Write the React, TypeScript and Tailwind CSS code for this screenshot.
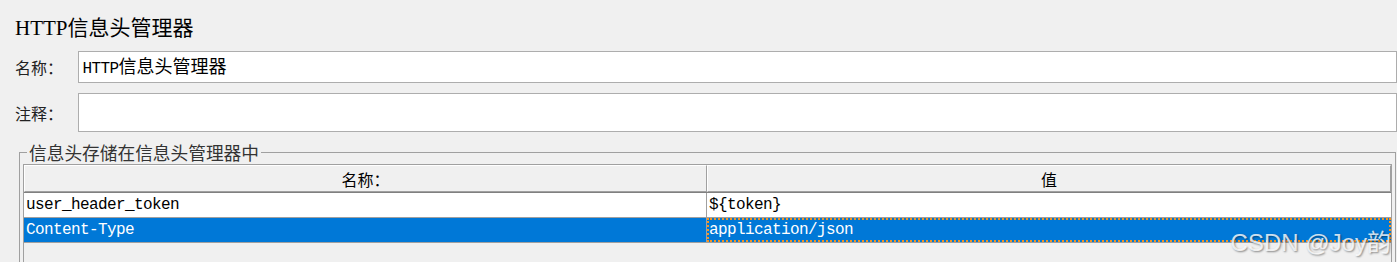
import React from 'react';

const cjk = '"Noto Sans CJK SC", sans-serif';
const mono = '"Liberation Mono", "Noto Sans CJK SC", monospace';

interface HeaderRow {
  name: string;
  value: string;
}

const rows: HeaderRow[] = [
  { name: 'user_header_token', value: '${token}' },
  { name: 'Content-Type', value: 'application/json' },
];

const selectedIndex = 1;

export default function App() {
  return (
    <div
      className="relative w-[1397px] h-[262px] overflow-hidden bg-[#f0f0f0] text-black"
      style={{ fontFamily: cjk }}
    >
      {/* 标题 */}
      <div className="h-[51px] pl-[15px] pt-[12px]">
        <h1 className="text-[21px] leading-[28px] font-normal">
          <span className="text-[21px]" style={{ fontFamily: '"Liberation Serif", serif' }}>HTTP</span>信息头管理器
        </h1>
      </div>

      {/* 名称 */}
      <div className="flex items-center h-[32px]">
        <label className="w-[79px] pl-[15px] text-[16px] leading-[20px] text-[#222]">名称：</label>
        <div className="flex items-center w-[1330px] h-[32px] bg-white border border-[#adadad] pl-[3px]">
          <span className="text-[18px] leading-[20px]">
            <span className="text-[16px] tracking-[-0.6px]" style={{ fontFamily: mono }}>HTTP</span>信息头管理器
          </span>
        </div>
      </div>

      {/* 注释 */}
      <div className="flex items-center h-[39px] mt-[10px]">
        <label className="w-[79px] pl-[15px] text-[16px] leading-[20px] text-[#222]">注释：</label>
        <div className="w-[1330px] h-[39px] bg-white border border-[#adadad]" />
      </div>

      {/* 信息头列表 */}
      <fieldset className="ml-[19px] mt-[10px] w-[1376px] h-[140px] border border-[#a0a0a0] px-[3px] pt-[2px]">
        <legend className="ml-[4px] px-[2px] text-[17.7px] leading-[20px] text-[#333]">
          信息头存储在信息头管理器中
        </legend>
        <div className="w-[1369px] h-[120px] border-l border-r border-t border-[#a0a0a0]">
          {/* 表头 */}
          <div className="flex h-[28px] border-b border-[#808080]">
            <div className="flex items-center justify-center w-[683px] bg-[#f0f0f0] border border-t-white border-l-white border-r-[#a0a0a0] border-b-[#a0a0a0] text-[16px]">
              名称：
            </div>
            <div className="flex items-center justify-center flex-1 bg-[#f0f0f0] border border-t-white border-l-white border-r-[#a0a0a0] border-b-[#a0a0a0] text-[16px]">
              值
            </div>
          </div>
          {/* 数据行 */}
          {rows.map((row, i) => {
            const selected = i === selectedIndex;
            return (
              <div
                key={row.name}
                className={
                  'flex h-[25px] border-b border-[#a0a0a0] text-[16px] tracking-[-0.6px] leading-[20px] ' +
                  (selected ? 'bg-[#0078d7] text-white' : 'bg-white text-black')
                }
                style={{ fontFamily: mono }}
              >
                <div className="flex items-center w-[683px] pl-[2px] border-r border-[#a0a0a0]">
                  {row.name}
                </div>
                <div
                  className={
                    'flex items-center flex-1 ' +
                    (selected ? 'border-2 border-dotted border-[#f7931e] pl-0' : 'pl-[2px]')
                  }
                >
                  {row.value}
                </div>
              </div>
            );
          })}
        </div>
      </fieldset>

      {/* 水印 */}
      <div
        className="absolute right-[6px] bottom-[4px] text-[24px] leading-[30px] text-white/80"
        style={{ fontFamily: '"Liberation Sans", "Noto Sans CJK SC", sans-serif', textShadow: '1px 1px 2px rgba(0,0,0,0.45)' }}
      >
        CSDN @Joy韵
      </div>
    </div>
  );
}
